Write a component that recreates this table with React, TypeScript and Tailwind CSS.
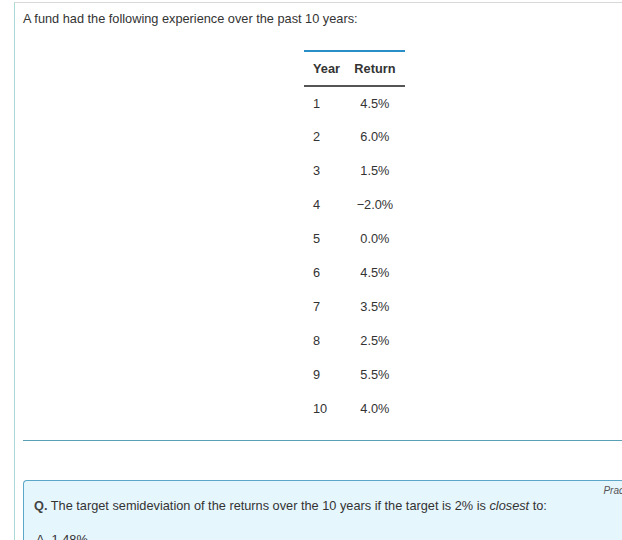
const rows: [string, string][] = [
  ["1", "4.5%"],
  ["2", "6.0%"],
  ["3", "1.5%"],
  ["4", "\u22122.0%"],
  ["5", "0.0%"],
  ["6", "4.5%"],
  ["7", "3.5%"],
  ["8", "2.5%"],
  ["9", "5.5%"],
  ["10", "4.0%"],
];

export default function App() {
  return (
    <div className="w-[622px] h-[540px] overflow-hidden bg-white text-[12.75px] text-[#333] font-['Liberation_Sans',Arial,sans-serif]">
      <div className="pt-[2px] pl-[14px]">
        <div className="border-t border-[#d8d8d8] border-l border-l-[#a9d9d6] h-[538px]">
          <div className="pl-[8px] pt-[7px] leading-[17px]">
            A fund had the following experience over the past 10 years:
          </div>

          {/* returns table */}
          <div className="pt-[23px] pl-[289px]">
            <table className="border-collapse w-[101px]">
              <thead>
                <tr className="border-t-2 border-[#2a8fc7] border-b-2 border-b-[#555]">
                  <th className="h-[35px] pl-[9px] text-left font-bold text-[#333]">Year</th>
                  <th className="h-[35px] text-center pr-[4px] font-bold text-[#333]">Return</th>
                </tr>
              </thead>
              <tbody>
                {rows.map(([y, r]) => (
                  <tr key={y}>
                    <td className="h-[34px] pl-[9px] text-left">{y}</td>
                    <td className="h-[34px] text-center pr-[4px]">{r}</td>
                  </tr>
                ))}
              </tbody>
            </table>
          </div>

          <div className="ml-[8px] mt-[14px] border-t border-[#5b9fb5]" />

          {/* question box */}
          <div className="ml-[8px] mt-[39px] rounded-tl-[4px] border-t border-l border-[#5ca7c7] bg-[#e6f6fd] h-[100px] relative">
            <div className="absolute right-[-2px] top-[2px] text-[10px] italic text-[#555]">Prac</div>
            <div className="pl-[10px] pt-[16px] leading-[17px]">
              <span className="font-bold text-[#444]">Q.</span> The target semideviation of the returns over the 10
              years if the target is 2% is <i>closest</i> to:
            </div>
            <div className="pl-[12px] pt-[17px] leading-[17px]">A. 1.48%</div>
          </div>
        </div>
      </div>
    </div>
  );
}
